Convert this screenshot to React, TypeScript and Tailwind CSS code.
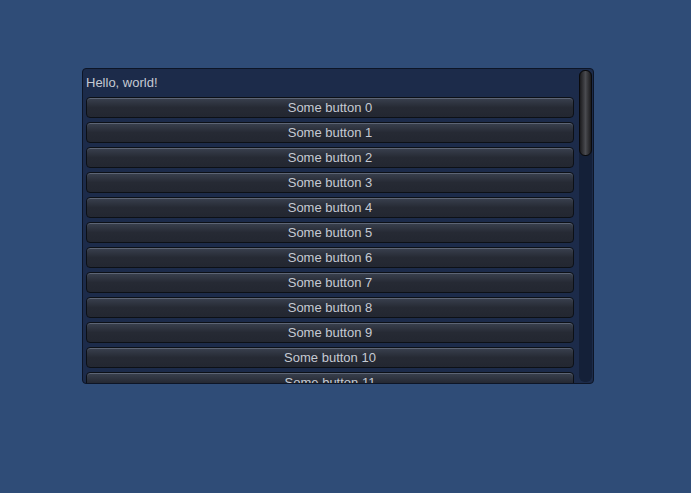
const buttons = Array.from({ length: 12 }, (_, i) => `Some button ${i}`);

function GuiButton({ label }: { label: string }) {
  return (
    <div className="h-[21px] mb-[4px] shrink-0 rounded-[4px] border border-[#0c1016] bg-gradient-to-b from-[#3a414f] via-[#262a34] to-[#232731] shadow-[inset_0_1px_0_#5d6575] flex items-center justify-center text-[13px] leading-none text-[#c5cad3]">
      {label}
    </div>
  );
}

export default function App() {
  return (
    <div
      className="w-full h-[493px] bg-[#2f4c77] pt-[68px] pl-[82px]"
      style={{ fontFamily: '"Liberation Sans", Arial, sans-serif' }}
    >
      <div className="w-[512px] h-[316px] rounded-[4px] border border-[#0d1526] bg-[#1c2b4a] flex overflow-hidden">
        <div className="flex-1 flex flex-col pl-[3px] pr-[5px] overflow-hidden">
          <div className="h-[28px] shrink-0 flex items-center pb-[1px] text-[13px] text-[#c5cad3]">
            Hello, world!
          </div>
          {buttons.map((b) => (
            <GuiButton key={b} label={b} />
          ))}
        </div>
        <div className="w-[13px] my-[1px] mr-[1px] rounded-[6px] bg-[#142038] flex flex-col">
          <div className="h-[86px] rounded-[6px] border border-[#0a0a0c] bg-gradient-to-r from-[#1c1c1f] via-[#4a4b50] to-[#1c1c1f]" />
        </div>
      </div>
    </div>
  );
}
